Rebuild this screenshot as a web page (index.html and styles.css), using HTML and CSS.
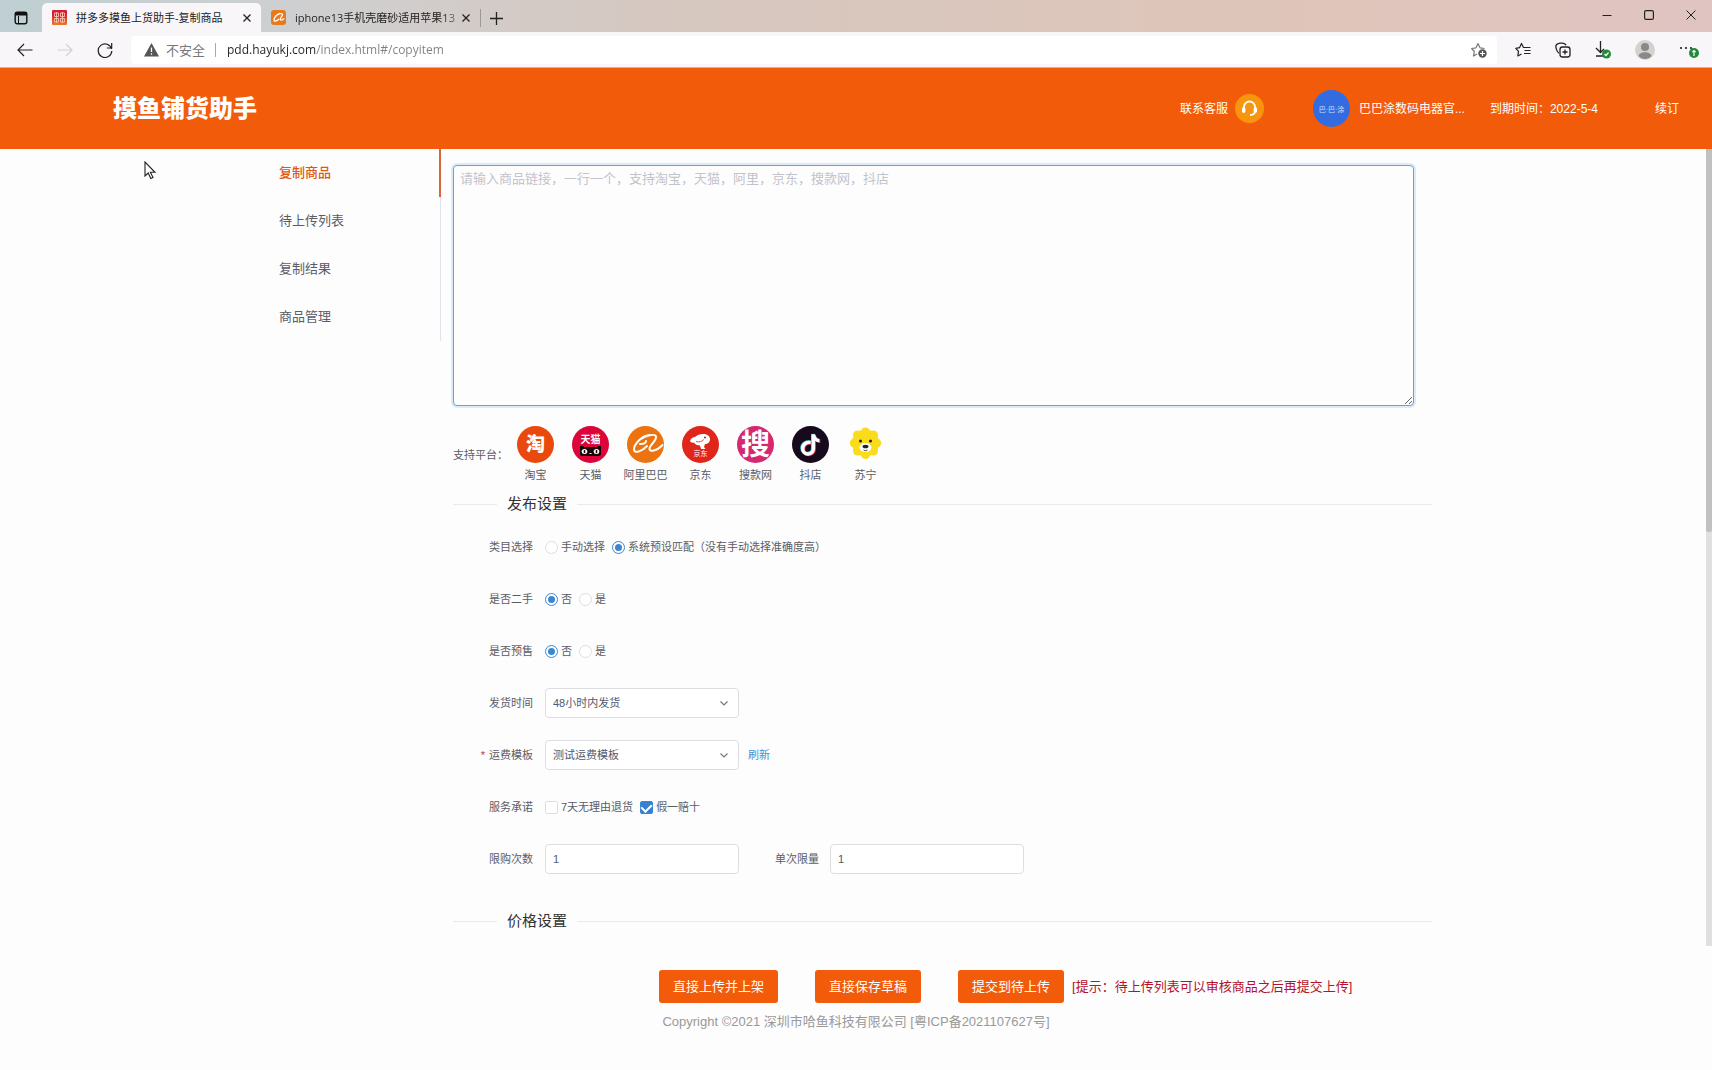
FILE: index.html
```html
<!DOCTYPE html>
<html lang="zh-CN">
<head>
<meta charset="utf-8">
<meta name="viewport" content="width=device-width, initial-scale=1">
<title>拼多多摸鱼上货助手-复制商品</title>
<link rel="stylesheet" href="styles.css">
</head>
<body>
<div class="browser">
  <div class="tabbar">
    <button class="icon-btn tab-menu" aria-label="标签页操作">
      <svg width="14" height="14" viewBox="0 0 14 14"><rect x="1.2" y="1.2" width="11.6" height="11.6" rx="2" fill="none" stroke="#111" stroke-width="1.4"/><path d="M1.500 1.500h11v2.500h-11z" fill="#111" stroke="#111"/><path d="M4.500 5v8" stroke="#111"/></svg>
    </button>
    <div class="tab tab-active">
      <svg class="favicon" width="15" height="15" viewBox="0 0 15 15"><defs><linearGradient id="fav" x2="0" y2="1"><stop offset=".3" stop-color="#d31f35"/><stop offset="1" stop-color="#ee7a1e"/></linearGradient></defs><rect width="15" height="15" rx="1" fill="url(#fav)"/><path d="M2.500 3h4v3.500h-4zM8.500 3h4v3.500h-4zM2.500 8.500h4V12h-4zM8.500 8.500h4V12h-4zM4.500 2v11M10.500 2v11" stroke="#fbc3b0" fill="none" stroke-width=".9"/></svg>
      <span class="tab-title">拼多多摸鱼上货助手-复制商品</span>
      <button class="icon-btn" aria-label="关闭标签页"><svg width="8" height="8" viewBox="0 0 8 8"><path d="M.5.5l7 7M7.500.5l-7 7" stroke="#222" stroke-width="1.3"/></svg></button>
    </div>
    <div class="tab">
      <svg class="favicon" width="15" height="15" viewBox="0 0 15 15"><rect width="15" height="15" rx="3" fill="#e8791d"/><path d="M9 3.500C6 4 3 7.500 3 10c0 2 3 1 5-1M6 5c2-1.500 5.500-2 5.500-.5S9.500 7.500 9.300 9s1.500 1.500 4-.5" fill="none" stroke="#fff" stroke-width="1.300"/></svg>
      <span class="tab-title tab-fade">iphone13手机壳磨砂适用苹果13</span>
      <button class="icon-btn" aria-label="关闭标签页"><svg width="8" height="8" viewBox="0 0 8 8"><path d="M.5.5l7 7M7.500.5l-7 7" stroke="#222" stroke-width="1.3"/></svg></button>
    </div>
    <button class="icon-btn new-tab" aria-label="新建标签页"><svg width="13" height="13" viewBox="0 0 13 13"><path d="M6.500 0v13M0 6.500h13" stroke="#222" stroke-width="1.3"/></svg></button>
    <div class="window-controls">
      <button class="icon-btn" aria-label="最小化"><svg width="10" height="10" viewBox="0 0 10 10"><path d="M.5 5.500h9" stroke="#222"/></svg></button>
      <button class="icon-btn" aria-label="最大化"><svg width="10" height="10" viewBox="0 0 10 10"><rect x=".6" y=".6" width="8.800" height="8.800" rx="1.500" fill="none" stroke="#222" stroke-width="1.200"/></svg></button>
      <button class="icon-btn" aria-label="关闭"><svg width="10" height="10" viewBox="0 0 10 10"><path d="M.5.5l9 9M9.500.5l-9 9" stroke="#222"/></svg></button>
    </div>
  </div>
  <div class="toolbar">
    <div class="nav-buttons">
      <button class="icon-btn" aria-label="后退"><svg width="16" height="14" viewBox="0 0 16 14"><path d="M15.500 7H1M7 1L1 7l6 6" fill="none" stroke="#222" stroke-width="1.200"/></svg></button>
      <button class="icon-btn" aria-label="前进"><svg width="16" height="14" viewBox="0 0 16 14"><path d="M.5 7H15M9 1l6 6-6 6" fill="none" stroke="#d3d0d3" stroke-width="1.200"/></svg></button>
      <button class="icon-btn" aria-label="刷新页面"><svg width="16" height="16" viewBox="0 0 16 16"><path d="M14.600 7A6.800 6.800 0 1 0 14.800 9M14.700 1v5H9.800" fill="none" stroke="#222" stroke-width="1.200"/></svg></button>
    </div>
    <div class="address">
      <svg width="15" height="14" viewBox="0 0 15 14"><path d="M7.500 0L15 13.500H0z" fill="#555"/><path d="M7.500 4.500v4.500M7.500 10.300v1.500" stroke="#fff" stroke-width="1.300"/></svg>
      <span class="unsafe">不安全</span>
      <input class="url" type="text" aria-label="地址栏" value="pdd.hayukj.com/index.html#/copyitem">
      <button class="icon-btn" aria-label="添加收藏"><svg width="16" height="16" viewBox="0 0 16 16"><path d="M6 12l-3.500 2 .8-4.500L.7 6.500l4.300-.7L7 1.500l2 4.300 4.500.7" fill="none" stroke="#777" stroke-width="1.200" stroke-linejoin="round"/><circle cx="11.500" cy="11.500" r="4.200" fill="#555"/><path d="M11.500 9v5M9 11.500h5" stroke="#fff" stroke-width="1.200"/></svg></button>
    </div>
    <div class="tools">
      <button class="icon-btn" aria-label="收藏夹"><svg width="16" height="16" viewBox="0 0 16 16"><path d="M8.500 5.500L6.500 1.500l-2 4.200L.8 6.400l2.700 3-.7 4.600 3.700-2M8 5.500h7.500M9.500 8.500h6M9 11.500h6.500" fill="none" stroke="#222" stroke-width="1.200" stroke-linejoin="round"/></svg></button>
      <button class="icon-btn" aria-label="集锦"><svg width="16" height="16" viewBox="0 0 16 16"><rect x="5" y="5" width="10" height="10" rx="2.500" fill="none" stroke="#222" stroke-width="1.300"/><path d="M10 7.500v5M7.500 10h5M4 11C2 10.500.5 5 1 3.500S3 1.500 5 1.200s5-.7 6 2" fill="none" stroke="#222" stroke-width="1.300"/></svg></button>
      <button class="icon-btn" aria-label="下载"><svg width="16" height="18" viewBox="0 0 16 18"><path d="M5.500 0v11M1 7l4.500 4.500L9 8M1 15h7" fill="none" stroke="#222" stroke-width="1.300"/><circle cx="11.500" cy="13" r="4.500" fill="#1f8a3b"/><path d="M9.500 13l1.500 1.500 2.500-3" fill="none" stroke="#fff" stroke-width="1.200"/></svg></button>
      <button class="icon-btn" aria-label="个人资料"><svg width="20" height="20" viewBox="0 0 20 20"><circle cx="10" cy="10" r="10" fill="#d4d2d1"/><circle cx="10" cy="7" r="4" fill="#8b8988"/><path d="M3.500 16c1-5 12-5 13 0-3 4-10 4-13 0z" fill="#8b8988"/></svg></button>
      <button class="icon-btn" aria-label="设置及其他"><svg width="20" height="18" viewBox="0 0 20 18"><g fill="#222"><circle cx="2" cy="7" r="1.100"/><circle cx="7" cy="7" r="1.100"/><circle cx="12" cy="7" r="1.100"/></g><circle cx="15" cy="12" r="5" fill="#1f8a3b"/><path d="M15 15v-5M13.300 11.200L15 9.500l1.700 1.700" fill="none" stroke="#fff" stroke-width="1.200"/></svg></button>
    </div>
  </div>
</div>

<header class="site-header">
  <h1 class="logo">摸鱼铺货助手</h1>
  <div class="account">
    <a class="service" href="#service">联系客服
      <svg width="29" height="29" viewBox="0 0 29 29"><circle cx="14.500" cy="14.500" r="14.500" fill="#f7950f"/><path d="M9 16v-3a5.500 5.500 0 0 1 11 0v3M20 17c0 2.500-2 4-5 4" fill="none" stroke="#fff" stroke-width="1.800"/><rect x="7" y="13" width="3.400" height="6" rx="1.700" fill="#fff"/><rect x="18.600" y="13" width="3.400" height="6" rx="1.700" fill="#fff"/></svg>
    </a>
    <a class="shop" href="#shop">
      <svg width="37" height="37" viewBox="0 0 37 37"><circle cx="18.500" cy="18.500" r="18.500" fill="#326ce0"/><text x="18.500" y="21.500" font-size="7" fill="#cfe0ff" text-anchor="middle">巴·巴·涂</text></svg>
      <span>巴巴涂数码电器官...</span>
    </a>
    <span class="expiry">到期时间：2022-5-4</span>
    <a class="renew" href="#renew">续订</a>
  </div>
</header>

<div class="viewport">
  <div class="page">
    <nav class="menu">
      <a class="menu-item menu-current" href="#copyitem">复制商品</a>
      <a class="menu-item" href="#upload">待上传列表</a>
      <a class="menu-item" href="#result">复制结果</a>
      <a class="menu-item" href="#manage">商品管理</a>
    </nav>
    <main class="main">
      <textarea class="links" aria-label="商品链接" placeholder="请输入商品链接，一行一个，支持淘宝，天猫，阿里，京东，搜款网，抖店"></textarea>
      <div class="platforms">
        <span class="platforms-label">支持平台：</span>
        <div class="platform"><svg viewBox="0 0 37 37"><circle cx="18.500" cy="18.500" r="18.500" fill="#e9490c"/><text class="heavy" x="18.500" y="25" font-size="19" fill="#fff" text-anchor="middle">淘</text></svg>淘宝</div>
        <div class="platform"><svg viewBox="0 0 37 37"><circle cx="18.500" cy="18.500" r="18.500" fill="#dc0438"/><text class="bold" x="18.500" y="16.500" font-size="10" fill="#fff" text-anchor="middle">天猫</text><path d="M8 20h3l1 1h13l1-1h3v8q0 2-2 2H10q-2 0-2-2z" fill="#1b0408"/><g fill="#fff"><ellipse cx="12.500" cy="25.500" rx="2.800" ry="2.500"/><ellipse cx="24.500" cy="25.500" rx="2.800" ry="2.500"/><path d="M17.500 27h2v1h-2z"/></g><path d="M12.500 24v3M24.500 24v3" stroke="#1b0408" stroke-width="1.500"/></svg>天猫</div>
        <div class="platform"><svg viewBox="0 0 37 37"><circle cx="18.500" cy="18.500" r="18.500" fill="#ec7310"/><path d="M22 9C15 10 7 18 7 23.500c0 4.500 8 2 13-3.500M13 18c3 0 6-1 6-3M14 13c4-3 14-6 15-2.500 1 4-6 8-6.500 12S30 25 35.500 19" fill="none" stroke="#fff" stroke-width="2" stroke-linecap="round"/></svg>阿里巴巴</div>
        <div class="platform"><svg viewBox="0 0 37 37"><circle cx="18.500" cy="18.500" r="18.500" fill="#e1251b"/><path d="M8 15c1-3 3-4 5-4 2-2 5-3 8-3 4 0 7 2 7 5s-2 5-5 5l-1 3 1.500 2H19l-1-3.500c-3 0-5-1-6-3-2 .5-3 0-4-1.500z" fill="#fff"/><circle cx="23" cy="11.500" r=".9" fill="#333"/><path d="M14 15.500c3 1 6 0 8-2" fill="none" stroke="#e1251b" stroke-width=".8"/><text x="18.500" y="30" font-size="7" fill="#fff" text-anchor="middle">京东</text></svg>京东</div>
        <div class="platform"><svg viewBox="0 0 37 37"><circle cx="18.500" cy="18.500" r="18.500" fill="#d6286f"/><text class="bold" x="18.500" y="29" font-size="29" fill="#fff" text-anchor="middle">搜</text></svg>搜款网</div>
        <div class="platform"><svg viewBox="0 0 37 37"><circle cx="18.500" cy="18.500" r="18.500" fill="#160a1c"/><g fill="none" stroke-width="3.400"><path d="M18 16c-4-.5-8 1.500-8 6 0 3 2 5.500 5.300 5.500s5.400-2.500 5.400-5.500V8c.8 4 3 6 6 6.200" stroke="#38d9e3"/><path d="M19.500 17c-4-.5-8 1.500-8 6 0 3 2 5.500 5.300 5.500s5.400-2.500 5.400-5.500V9c.8 4 3 6 6 6.200" stroke="#e8395b"/><path d="M18.700 16.500c-4-.5-8 1.500-8 6 0 3 2 5.500 5.300 5.500s5.400-2.500 5.400-5.500v-14c.8 4 3 6 6 6.200" stroke="#fff"/></g></svg>抖店</div>
        <div class="platform"><svg viewBox="0 0 37 37"><g fill="#fbdc1c"><circle cx="18.500" cy="17" r="13.500"/><circle cx="18.500" cy="6" r="4.500"/><circle cx="26.500" cy="9" r="4.500"/><circle cx="29.700" cy="17" r="4.500"/><circle cx="26.500" cy="25" r="4.500"/><circle cx="18.500" cy="28.500" r="4.500"/><circle cx="10.500" cy="25" r="4.500"/><circle cx="7.300" cy="17" r="4.500"/><circle cx="10.500" cy="9" r="4.500"/></g><ellipse cx="18.500" cy="21.500" rx="6" ry="4.500" fill="#fff"/><ellipse cx="18.500" cy="20.500" rx="3" ry="1.800" fill="#222"/><circle cx="13.500" cy="15" r="1.500" fill="#222"/><circle cx="23.500" cy="15" r="1.500" fill="#222"/><path d="M16.500 24q2 1.500 4 0" fill="none" stroke="#222" stroke-width=".8"/></svg>苏宁</div>
      </div>

      <h2 class="section-title">发布设置</h2>
      <form class="settings" id="settings">
        <div class="row" role="radiogroup" aria-labelledby="l-cat">
          <span class="label" id="l-cat">类目选择</span>
          <label class="choice"><input type="radio" name="category">手动选择</label>
          <label class="choice"><input type="radio" name="category" checked>系统预设匹配（没有手动选择准确度高）</label>
        </div>
        <div class="row" role="radiogroup" aria-labelledby="l-used">
          <span class="label" id="l-used">是否二手</span>
          <label class="choice"><input type="radio" name="used" checked>否</label>
          <label class="choice"><input type="radio" name="used">是</label>
        </div>
        <div class="row" role="radiogroup" aria-labelledby="l-pre">
          <span class="label" id="l-pre">是否预售</span>
          <label class="choice"><input type="radio" name="presale" checked>否</label>
          <label class="choice"><input type="radio" name="presale">是</label>
        </div>
        <div class="row">
          <label class="label" for="ship">发货时间</label>
          <div class="select-wrap"><select class="field" id="ship"><option>48小时内发货</option></select><svg class="chevron" width="8" height="5" viewBox="0 0 8 5"><path d="M.5.5L4 4 7.500.5" fill="none" stroke="#777" stroke-width="1.200"/></svg></div>
        </div>
        <div class="row">
          <label class="label required" for="freight">运费模板</label>
          <div class="select-wrap"><select class="field" id="freight" required><option>测试运费模板</option></select><svg class="chevron" width="8" height="5" viewBox="0 0 8 5"><path d="M.5.5L4 4 7.500.5" fill="none" stroke="#777" stroke-width="1.200"/></svg></div>
          <a class="refresh" href="#refresh">刷新</a>
        </div>
        <div class="row" role="group" aria-labelledby="l-promise">
          <span class="label" id="l-promise">服务承诺</span>
          <label class="choice"><input type="checkbox">7天无理由退货</label>
          <label class="choice"><input type="checkbox" checked>假一赔十</label>
        </div>
        <div class="row">
          <label class="label" for="times">限购次数</label>
          <input class="field" id="times" type="text" value="1">
          <label class="label label-second" for="once">单次限量</label>
          <input class="field" id="once" type="text" value="1">
        </div>
      </form>
      <h2 class="section-title price-title">价格设置</h2>
    </main>
  </div>
  <div class="scroll-track"><div class="scroll-thumb"></div></div>
</div>

<footer class="footer">
  <div class="actions">
    <button class="primary" type="submit" form="settings">直接上传并上架</button>
    <button class="primary" type="button">直接保存草稿</button>
    <button class="primary" type="button">提交到待上传</button>
    <span class="hint">[提示：待上传列表可以审核商品之后再提交上传]</span>
  </div>
  <p class="copyright">Copyright ©2021 深圳市哈鱼科技有限公司 [粤ICP备2021107627号]</p>
</footer>
<svg class="pointer" width="13" height="19" viewBox="0 0 13 19"><path d="M1 1v14l3.200-3 2.600 5.500 2.200-1-2.600-5.200H11z" fill="#fff" stroke="#222" stroke-width="1.100"/></svg>
</body>
</html>
```
FILE: styles.css
```css
* { box-sizing: border-box; }

body {
  margin: 0;
  background: #fdfdfd;
  color: #5a5c66;
  font: 11px/16px "Liberation Sans", "Noto Sans CJK SC", sans-serif;
}

a { color: inherit; text-decoration: none; }
svg { display: block; flex: none; }
.bold { font-weight: 700; }
.heavy { font-weight: 900; }

.icon-btn {
  display: flex;
  align-items: center;
  justify-content: center;
  padding: 0;
  border: 0;
  background: none;
}

/* Browser frame */
.browser { font-family: "Open Sans", "Noto Sans CJK SC", sans-serif; }

.tabbar {
  display: flex;
  height: 32px;
  padding-top: 3px;
  background: linear-gradient(90deg, #bfcfd3 0, #cfcfd0 18%, #d6c7bf 40%, #dfc5b9 75%, #e0c4c2 100%);
}

.tab-menu { width: 42px; }

.tab {
  display: flex;
  align-items: center;
  width: 219px;
  padding: 0 10px;
  color: #222;
}

.tab-active {
  border-radius: 5px 5px 0 0;
  background: #f8f6f9;
}

.favicon { margin-right: 9px; }

.tab-title {
  flex: 1;
  white-space: nowrap;
}

.tab-fade { mask-image: linear-gradient(90deg, #000 88%, #0004); }

.new-tab {
  width: 32px;
  height: 18px;
  margin-top: 6px;
  border-left: 1px solid #999;
}

.window-controls {
  display: flex;
  gap: 32px;
  margin-left: auto;
  padding-right: 16px;
  padding-bottom: 6px;
}

.toolbar {
  display: flex;
  align-items: center;
  height: 36px;
  border-bottom: 1px solid #d0b4a8;
  background: #f8f6f9;
}

.nav-buttons {
  display: flex;
  gap: 24px;
  width: 131px;
  padding-left: 17px;
}

.address {
  display: flex;
  flex: 1;
  align-items: center;
  height: 28px;
  padding: 0 10px 0 13px;
  border-radius: 4px;
  background: #fff;
}

.unsafe {
  margin: 0 11px 0 7px;
  padding-right: 10px;
  border-right: 1px solid #aaa;
  color: #777;
  font-size: 13px;
  line-height: 14px;
}

.url {
  flex: 1;
  padding: 0;
  border: 0;
  outline: 0;
  background: linear-gradient(90deg, #222 89px, #808080 89px);
  background-clip: text;
  color: transparent;
  font: 12px/20px "Open Sans", sans-serif;
}

.tools {
  display: flex;
  align-items: center;
  gap: 24px;
  padding: 0 13px 0 18px;
}

/* Site header */
.site-header {
  display: flex;
  align-items: center;
  justify-content: space-between;
  height: 81px;
  padding: 0 33px 0 113px;
  background: #f25b0a;
  color: #fff;
  font-size: 12px;
}

.logo {
  margin: 0;
  font-size: 24px;
  font-weight: 900;
  line-height: 32px;
}

.account, .service, .shop {
  display: flex;
  align-items: center;
}

.service { gap: 7px; }
.shop { gap: 9px; margin-left: 49px; }
.expiry { margin-left: 25px; }
.renew { margin-left: 57px; }

/* Scrolling area */
.viewport { display: flex; }

.page {
  display: flex;
  flex: 1;
  align-items: flex-start;
  gap: 12px;
  padding: 0 274px 0 279px;
}

.scroll-track {
  width: 6px;
  background: #e0e0e0;
}

.scroll-thumb {
  height: 48%;
  border-radius: 0 0 2px 2px;
  background: #c1c1c1;
}

.menu {
  flex: none;
  width: 162px;
  border-right: 1px solid #e2e2ea;
  font-size: 13px;
}

.menu-item {
  display: block;
  line-height: 48px;
}

.menu-current {
  margin-right: -1px;
  border-right: 2px solid #d5693a;
  color: #e0570f;
  font-weight: 500;
}

.main {
  flex: 1;
  min-width: 0;
  padding: 16px 0 9px;
}

.links {
  display: block;
  width: calc(100% - 18px);
  height: 241px;
  padding: 4px 6px;
  border: 1px solid #6f9fce;
  border-radius: 4px;
  outline: 0;
  background: #fdfdfd;
  box-shadow: 0 0 0 2px #dcebf7;
  font: 13px/18px "Liberation Sans", "Noto Sans CJK SC", sans-serif;
}

.links::placeholder { color: #c3c3cc; }

.platforms {
  display: flex;
  align-items: center;
  margin-top: 20px;
}

.platforms-label { width: 55px; }

.platform {
  width: 55px;
  text-align: center;
  white-space: nowrap;
}

.platform svg {
  width: 37px;
  height: 37px;
  margin: 0 auto 4px;
}

.section-title {
  display: flex;
  align-items: center;
  gap: 10px;
  height: 32px;
  margin: 5px 0 0;
  color: #333;
  font-size: 15px;
  font-weight: 400;
}

.section-title::before,
.section-title::after {
  width: 44px;
  height: 1px;
  background: #e8eaec;
  content: "";
}

.section-title::after { flex: 1; }
.price-title { margin-top: 20px; }

.settings { padding-top: 1px; }

.row {
  display: flex;
  align-items: center;
  height: 52px;
}

.label {
  width: 80px;
  margin-right: 12px;
  text-align: right;
}

.required::before {
  margin-right: 4px;
  color: #c0392b;
  content: "*";
}

.choice {
  display: flex;
  align-items: center;
  gap: 3px;
  margin-right: 7px;
}

.choice input {
  display: grid;
  place-items: center;
  width: 13px;
  height: 13px;
  margin: 0;
  border: 1px solid #dcdee2;
  background: #fff;
  appearance: none;
}

.choice [type="radio"] { border-radius: 50%; }
.choice [type="checkbox"] { border-radius: 2px; }
.choice input:checked { border-color: #3d86cf; }

.choice [type="radio"]:checked::after {
  width: 7px;
  height: 7px;
  border-radius: 50%;
  background: #3d86cf;
  content: "";
}

.choice [type="checkbox"]:checked { background: #3580cf; }

.choice [type="checkbox"]:checked::after {
  width: 5px;
  height: 8px;
  margin-bottom: 2px;
  border: solid #fff;
  border-width: 0 2px 2px 0;
  transform: rotate(45deg);
  content: "";
}

.field {
  display: block;
  width: 194px;
  height: 30px;
  padding: 0 7px;
  border: 1px solid #dcdee2;
  border-radius: 4px;
  background: #fff;
  color: #515a6e;
  font: 11px/16px "Liberation Sans", "Noto Sans CJK SC", sans-serif;
  appearance: none;
}

.select-wrap { position: relative; }

.chevron {
  position: absolute;
  top: 13px;
  right: 11px;
  pointer-events: none;
}

.refresh {
  margin-left: 9px;
  color: #4a8fd3;
}

.label-second {
  width: 70px;
  margin-left: 10px;
  margin-right: 11px;
}

/* Bottom actions */
.footer { padding-top: 24px; }

.actions {
  display: flex;
  align-items: center;
  padding-left: 659px;
}

.primary {
  height: 33px;
  margin-right: 37px;
  padding: 0 14px;
  border: 0;
  border-radius: 3px;
  background: #f25b0a;
  color: #fff;
  font: 13px/20px "Liberation Sans", "Noto Sans CJK SC", sans-serif;
  white-space: nowrap;
}

.primary:last-of-type { margin-right: 8px; }

.hint {
  color: #b5122b;
  font-size: 13px;
}

.copyright {
  margin: 9px 0 0;
  color: #999;
  font-size: 13px;
  line-height: 20px;
  text-align: center;
}

.pointer {
  position: absolute;
  top: 161px;
  left: 144px;
}
```
